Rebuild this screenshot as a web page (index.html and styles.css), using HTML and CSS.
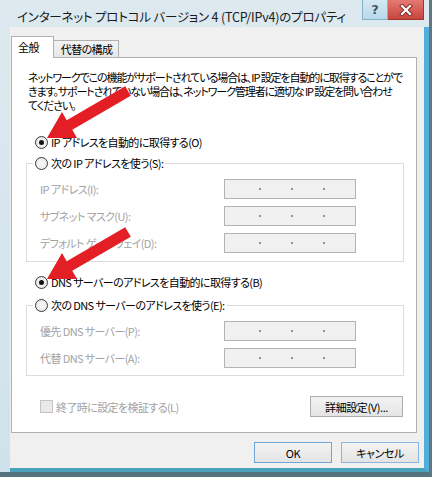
FILE: index.html
```html
<!DOCTYPE html>
<html lang="ja">
<head>
<meta charset="utf-8">
<title>インターネット プロトコル バージョン 4 (TCP/IPv4)のプロパティ</title>
<link rel="stylesheet" href="styles.css">
</head>
<body>
<div class="window">
  <div class="titlebar">
    <div class="title">インターネット プロトコル バージョン 4 (TCP/IPv4)のプロパティ</div>
    <div class="caption-buttons">
      <div class="cbtn help">?</div>
      <div class="cbtn close">
        <svg width="14" height="12" viewBox="0 0 14 12">
          <path d="M3 2 L11 10 M11 2 L3 10" stroke="#7a2a25" stroke-width="4" stroke-linecap="square"/>
          <path d="M3 2 L11 10 M11 2 L3 10" stroke="#ffffff" stroke-width="2.2" stroke-linecap="square"/>
        </svg>
      </div>
    </div>
  </div>
  <div class="client">
    <div class="tabs">
      <div class="tab active">全般</div>
      <div class="tab">代替の構成</div>
    </div>
    <div class="panel">
      <p class="desc">ネットワークでこの機能がサポートされている場合は、IP 設定を自動的に取得することがで<br>きます。サポートされていない場合は、ネットワーク管理者に適切な IP 設定を問い合わせ<br>てください。</p>
      <div class="radio-row first"><span class="radio checked"></span>IP アドレスを自動的に取得する(O)</div>
      <fieldset class="group">
        <legend><span class="radio-row"><span class="radio"></span>次の IP アドレスを使う(S):</span></legend>
        <div class="fields">
          <div class="field"><span class="flabel">IP アドレス(I):</span><span class="ipbox"><i></i><i></i><i></i></span></div>
          <div class="field"><span class="flabel">サブネット マスク(U):</span><span class="ipbox"><i></i><i></i><i></i></span></div>
          <div class="field"><span class="flabel">デフォルト ゲートウェイ(D):</span><span class="ipbox"><i></i><i></i><i></i></span></div>
        </div>
      </fieldset>
      <div class="radio-row dns"><span class="radio checked"></span>DNS サーバーのアドレスを自動的に取得する(B)</div>
      <fieldset class="group group2">
        <legend><span class="radio-row"><span class="radio"></span>次の DNS サーバーのアドレスを使う(E):</span></legend>
        <div class="fields">
          <div class="field"><span class="flabel">優先 DNS サーバー(P):</span><span class="ipbox"><i></i><i></i><i></i></span></div>
          <div class="field"><span class="flabel">代替 DNS サーバー(A):</span><span class="ipbox"><i></i><i></i><i></i></span></div>
        </div>
      </fieldset>
      <div class="footer-row">
        <div class="check-row"><span class="checkbox"></span>終了時に設定を検証する(L)</div>
        <button class="btn adv">詳細設定(V)...</button>
      </div>
    </div>
    <div class="dialog-buttons">
      <button class="btn dbtn ok">OK</button>
      <button class="btn dbtn">キャンセル</button>
    </div>
  </div>
  <svg class="arrows" width="432" height="477" viewBox="0 0 432 477">
    <polygon points="125.2,86.2 66.7,120.2 62,112 47,138 77,137.9 72.3,129.7 130.8,95.8"/>
    <polygon points="125.2,227.2 66.7,261.2 62,253 47,279 77,278.9 72.3,270.7 130.8,236.8"/>
  </svg>
</div>
</body>
</html>
```
FILE: styles.css
```css
body {
  margin: 0;
  font-family: "Noto Sans CJK JP", "Noto Sans", sans-serif;
  font-size: 11px;
  color: #000;
}

.window {
  width: 432px;
  height: 477px;
  box-sizing: border-box;
  background: linear-gradient(#dde9ef, #cfe2ec);
  border-right: 3px solid #5f7780;
  border-bottom: 5px solid #56747d;
  display: flex;
  flex-direction: column;
  position: relative;
  font-feature-settings: "palt";
  letter-spacing: -0.6px;
  overflow: hidden;
}

.titlebar {
  height: 27px;
  flex-shrink: 0;
  display: flex;
  align-items: flex-start;
}

.title {
  padding: 9px 0 0 17px;
  font-size: 12.5px;
  letter-spacing: -0.2px;
  line-height: 16px;
  color: #1a1a1a;
  white-space: nowrap;
}

.caption-buttons {
  margin-left: auto;
  margin-right: 5px;
  display: flex;
  letter-spacing: 0;
}

.cbtn {
  height: 20px;
  box-sizing: border-box;
  display: flex;
  align-items: center;
  justify-content: center;
}

.help {
  width: 26px;
  background: linear-gradient(#d4e9f4, #b7d8ea);
  border: 1px solid #86b3ca;
  border-top: 0;
  color: #45535c;
  font: bold 13px "DejaVu Sans", sans-serif;
  text-shadow: 0 0 1px #fff;
}

.close {
  width: 36px;
  background: linear-gradient(#e47a72, #c7453d);
  border: 1px solid #a2372e;
  border-top: 0;
  border-left: 0;
}

.client {
  flex: 1;
  margin-left: 10px;
  background: #f0f0f0;
  border-right: 5px solid #52aedc;
  border-bottom: 4px solid #4aa3ba;
  padding: 9px 7px 5px 1px;
  display: flex;
  flex-direction: column;
}

.tabs {
  display: flex;
  align-items: flex-end;
  height: 22px;
  margin-bottom: -1px;
  position: relative;
  z-index: 1;
}

.tab {
  height: 17px;
  line-height: 16px;
  margin-bottom: 1px;
  box-sizing: border-box;
  border: 1px solid #b0b0b0;
  border-bottom: 0;
  padding: 0 6px 0 7px;
  margin-left: -1px;
  background: linear-gradient(#f4f4f4, #e6e6e6);
}

.tab.active {
  height: 22px;
  line-height: 21px;
  margin-bottom: 0;
  margin-left: 0;
  padding: 0 14px 0 6px;
  background: #fff;
  position: relative;
  z-index: 2;
}

.panel {
  background: #fff;
  border: 1px solid #b0b0b0;
  padding: 12px 12px 15px 14px;
  display: flex;
  flex-direction: column;
}

.desc {
  margin: 0 0 0 2px;
  line-height: 14px;
  letter-spacing: -1.1px;
  white-space: nowrap;
}

.radio-row {
  display: flex;
  align-items: center;
  gap: 3px;
  height: 16px;
  white-space: nowrap;
}

.radio-row.first {
  margin: 22px 0 0 9px;
}

.radio-row.dns {
  margin: 12px 0 0 9px;
}

.radio {
  width: 13px;
  height: 13px;
  box-sizing: border-box;
  border-radius: 50%;
  border: 1px solid #3a3a3a;
  background: radial-gradient(circle, #fafafa, #e2e2e2);
  display: flex;
  align-items: center;
  justify-content: center;
  flex-shrink: 0;
}

.radio.checked::after {
  content: "";
  width: 5px;
  height: 5px;
  border-radius: 50%;
  background: #111;
}

.group {
  margin: 5px 0 0;
  padding: 8px 13px 8px;
  border: 1px solid #dcdcdc;
  min-width: 0;
}

.group2 {
  margin-top: 7px;
  padding-bottom: 7px;
}

.group legend {
  padding: 0 2px;
  margin-left: -7px;
}

.fields {
  display: flex;
  flex-direction: column;
  gap: 7px;
}

.field {
  display: grid;
  grid-template-columns: 184px 132px;
  align-items: center;
  height: 20px;
}

.flabel {
  color: #a2a2a2;
  white-space: nowrap;
}

.ipbox {
  height: 20px;
  box-sizing: border-box;
  border: 1px solid #b3b3b3;
  background: #f0f0f0;
  display: flex;
  align-items: center;
  padding-left: 34px;
  gap: 30px;
}

.ipbox i {
  width: 2px;
  height: 2px;
  background: #8f8f8f;
}

.footer-row {
  margin: 20px 1px 0 0;
  display: flex;
  align-items: center;
  justify-content: space-between;
}

.check-row {
  margin-left: 14px;
  display: flex;
  align-items: center;
  gap: 3px;
  color: #a2a2a2;
}

.checkbox {
  width: 13px;
  height: 13px;
  box-sizing: border-box;
  border: 1px solid #c4c4c4;
  background: #e9e9e9;
}

.btn {
  font: inherit;
  font-feature-settings: "palt";
  letter-spacing: -0.4px;
  color: #000;
  height: 21px;
  padding: 0;
  border: 1px solid #acacac;
  background: linear-gradient(#f3f3f3, #e4e4e4);
}

.adv {
  width: 93px;
}

.dialog-buttons {
  display: flex;
  justify-content: flex-end;
  gap: 9px;
  margin: 9px -2px 0 0;
}

.dbtn {
  width: 78px;
  border-color: #8ab7df;
}

.dbtn.ok {
  border-color: #6fa6d8;
}

.arrows {
  position: absolute;
  left: 0;
  top: 0;
  pointer-events: none;
  fill: #e31e24;
}
```
